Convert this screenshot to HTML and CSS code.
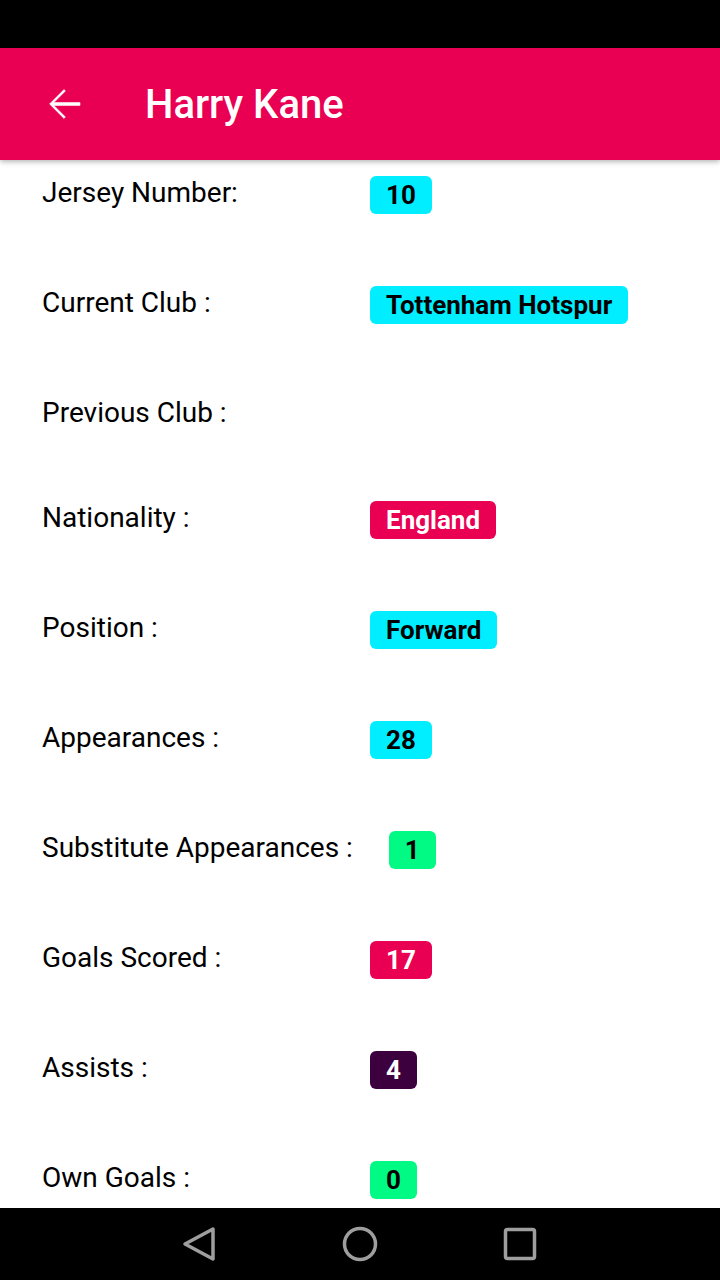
FILE: index.html
```html
<!DOCTYPE html>
<html>
<head>
<meta charset="utf-8">
<link rel="stylesheet" href="styles.css">
</head>
<body>
<div class="screen">
  <div class="status"></div>
  <header class="appbar">
    <svg class="back" width="48" height="48" viewBox="0 0 24 24"><path d="M20 11.3H6.9l5.8-5.8L12 4.8 4.8 12l7.2 7.2.7-.7-5.8-5.8H20v-1.4z" fill="#fff" stroke="#fff" stroke-width="0.3"/></svg>
    <h1 class="title">Harry Kane</h1>
  </header>
  <main class="content">
    <div class="row"><span class="label">Jersey Number:</span><span class="badge cyan">10</span></div>
    <div class="row"><span class="label">Current Club :</span><span class="badge cyan">Tottenham Hotspur</span></div>
    <div class="row"><span class="label">Previous Club :</span></div>
    <div class="row"><span class="label">Nationality :</span><span class="badge pink">England</span></div>
    <div class="row"><span class="label">Position :</span><span class="badge cyan">Forward</span></div>
    <div class="row"><span class="label">Appearances :</span><span class="badge cyan">28</span></div>
    <div class="row"><span class="label">Substitute Appearances :</span><span class="badge green">1</span></div>
    <div class="row"><span class="label">Goals Scored :</span><span class="badge pink">17</span></div>
    <div class="row"><span class="label">Assists :</span><span class="badge purple">4</span></div>
    <div class="row"><span class="label">Own Goals :</span><span class="badge green">0</span></div>
  </main>
  <nav class="navbar">
    <svg width="40" height="40" viewBox="0 0 40 40"><path d="M33 5 L5 20 L33 35 Z" fill="none" stroke="#9e9e9e" stroke-width="3.5" stroke-linejoin="round"/></svg>
    <svg width="40" height="40" viewBox="0 0 40 40"><circle cx="20" cy="20" r="15.5" fill="none" stroke="#9e9e9e" stroke-width="3.5"/></svg>
    <svg width="40" height="40" viewBox="0 0 40 40"><rect x="5.5" y="5.5" width="29" height="29" rx="2" fill="none" stroke="#9e9e9e" stroke-width="3.5"/></svg>
  </nav>
</div>
</body>
</html>
```
FILE: styles.css
```css
* { box-sizing: border-box; }
html, body { margin: 0; padding: 0; }
body { font-family: Roboto, "Liberation Sans", sans-serif; background: #fff; }
.screen { width: 720px; height: 1280px; display: flex; flex-direction: column; overflow: hidden; }
.status { height: 48px; background: #000; flex: none; }
.appbar {
  height: 112px; flex: none; background: #ea0052; display: flex; align-items: center;
  padding-left: 40px; position: relative; z-index: 2;
  box-shadow: 0 2px 5px rgba(0,0,0,0.28);
}
.back { display: block; }
.title { margin: 0 0 0 57px; color: #fff; font-size: 40px; font-weight: 500; letter-spacing: 0; }
.content { flex: 1; overflow: hidden; padding: 16px 0 0 42px; display: flex; flex-direction: column; gap: 72px; }
.row { display: flex; align-items: flex-start; }
.label { font-size: 28px; line-height: 33px; color: #000; min-width: 292px; margin-right: 36px; }
.badge { font-size: 26px; font-weight: 700; line-height: 38px; padding: 0 16px; border-radius: 6px; color: #000; }
.cyan { background: #00eeff; }
.pink { background: #ea0052; color: #fff; }
.green { background: #00fa83; }
.purple { background: #3d003f; color: #fff; }
.navbar { height: 72px; flex: none; background: #000; display: flex; justify-content: center; align-items: center; gap: 120px; }
```
